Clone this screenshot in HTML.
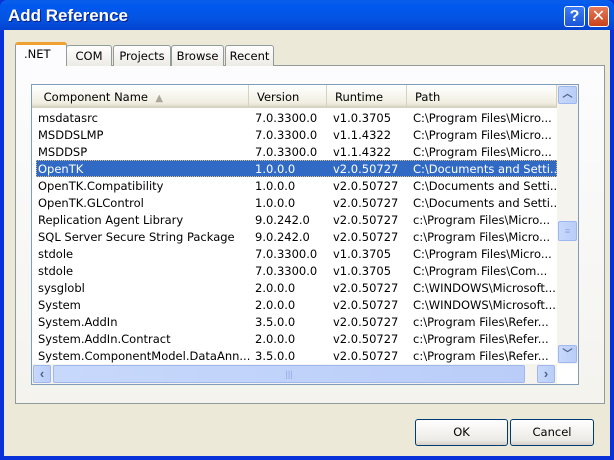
<!DOCTYPE html>
<html><head><style>
*{margin:0;padding:0;box-sizing:border-box}
body{width:614px;height:460px;overflow:hidden;font-family:"Liberation Sans","DejaVu Sans",sans-serif;font-size:12px;background:#0831d9;position:relative}
.a{position:absolute}
.title{left:0;top:0;width:614px;height:30px;background:linear-gradient(#0a5fe8,#0058ee 20%,#0454e3 60%,#0343d0);border-radius:7px 7px 0 0}
.title span{position:absolute;left:8px;top:6px;color:#fff;font-weight:bold;font-size:17px;text-shadow:1px 1px #0a1e8c}
.body{left:4px;top:30px;width:606px;height:426px;background:#ece9d8}
.tb{position:absolute;top:6px;width:21px;height:21px;border:1px solid #fff;border-radius:3px;color:#fff;font-weight:bold;text-align:center;font-size:16px;line-height:19px}
.tab{position:absolute;top:45px;height:21px;border:1px solid #919b9c;border-bottom:none;border-radius:3px 3px 0 0;background:linear-gradient(#fff,#ecebe5);text-align:center;line-height:20px;font-family:"DejaVu Sans",sans-serif;font-size:11.5px}
.panel{left:15px;top:65px;width:590px;height:339px;border:1px solid #919b9c;background:linear-gradient(#fcfcfe,#f4f3ee)}
.lv{left:31px;top:84px;width:548px;height:301px;border:1px solid #7f9db9;background:#fff}
.row{position:absolute;left:36px;width:521px;height:17px;font-family:"DejaVu Sans",sans-serif;font-size:11.5px;line-height:18px;white-space:nowrap;color:#000}
.row span{position:absolute;top:0}
.sel{background:#316ac5;color:#fff;outline:1px dotted #e0c080;outline-offset:-1px}
.hdr{position:absolute;top:85px;height:23px;border-right:1px solid #d6d2c2;background:linear-gradient(#fff,#f1efe2 85%,#e2decd);font-family:"DejaVu Sans",sans-serif;font-size:11.5px;line-height:24px;padding-left:8px;border-bottom:2px solid #d8d4c4}
.sb{background:linear-gradient(90deg,#c7d8fb,#b9cdf8);border:1px solid #9eb7ef;border-radius:2px;font-weight:bold}
.btn{position:absolute;top:419px;height:27px;border:1px solid #003c74;border-radius:3px;background:linear-gradient(#fff,#ecebe6 80%,#d6d0c5);text-align:center;line-height:25px;font-family:"DejaVu Sans",sans-serif;font-size:11.5px}
</style></head><body>
<div class="a title"><span>Add Reference</span>
<div class="tb" style="left:564px;background:linear-gradient(#3c7cf6,#1a55d8)">?</div>
<div class="tb" style="left:588px;background:linear-gradient(#e57a5a,#c8411b)">✕</div>
</div>
<div class="a body"></div>
<div class="a panel"></div>
<div class="tab" style="left:66px;width:46px">COM</div>
<div class="tab" style="left:113px;width:58px">Projects</div>
<div class="tab" style="left:171px;width:53px">Browse</div>
<div class="tab" style="left:225px;width:49px">Recent</div>
<div class="tab" style="left:15px;top:42px;width:52px;height:24px;background:#fcfcfe;border-top:3px solid #f0a030;text-align:left;padding-left:8px;line-height:18px">.NET</div>
<div class="a lv"></div>
<div class="hdr" style="left:32px;width:217px">&nbsp;Component Name &nbsp;<span style="color:#aca899;font-size:10px">▲</span></div>
<div class="hdr" style="left:249px;width:78px">Version</div>
<div class="hdr" style="left:327px;width:80px">Runtime</div>
<div class="hdr" style="left:407px;width:150px">Path</div>
<div id="rows"></div>
<div class="a" style="left:557px;top:85px;width:21px;height:279px;background:#f4f3ee"></div>
<div class="a sb" style="left:558px;top:86px;width:19px;height:18px;text-align:center;font-size:10px;line-height:16px;color:#4d6185">︿</div>
<div class="a sb" style="left:558px;top:345px;width:19px;height:18px;text-align:center;font-size:10px;line-height:18px;color:#4d6185">﹀</div>
<div class="a sb" style="left:558px;top:221px;width:19px;height:20px;text-align:center;font-size:9px;line-height:18px;color:#8da7e0">≡</div>
<div class="a" style="left:32px;top:364px;width:525px;height:20px;background:#f4f3ee"></div>
<div class="a sb" style="left:33px;top:365px;width:18px;height:18px;text-align:center;color:#4d6185;font-size:13px;line-height:15px">‹</div>
<div class="a sb" style="left:53px;top:365px;width:472px;height:18px;text-align:center;color:#8da7e0;font-size:9px;line-height:16px;font-weight:normal">|||</div>
<div class="a sb" style="left:537px;top:365px;width:18px;height:18px;text-align:center;color:#4d6185;font-size:13px;line-height:15px">›</div>
<div class="btn" style="left:415px;width:93px">OK</div>
<div class="btn" style="left:510px;width:84px">Cancel</div>
<script>
var d=[["msdatasrc","7.0.3300.0","v1.0.3705","C:\\Program Files\\Micro..."],
["MSDDSLMP","7.0.3300.0","v1.1.4322","C:\\Program Files\\Micro..."],
["MSDDSP","7.0.3300.0","v1.1.4322","C:\\Program Files\\Micro..."],
["OpenTK","1.0.0.0","v2.0.50727","C:\\Documents and Setti..."],
["OpenTK.Compatibility","1.0.0.0","v2.0.50727","C:\\Documents and Setti..."],
["OpenTK.GLControl","1.0.0.0","v2.0.50727","C:\\Documents and Setti..."],
["Replication Agent Library","9.0.242.0","v2.0.50727","c:\\Program Files\\Micro..."],
["SQL Server Secure String Package","9.0.242.0","v2.0.50727","c:\\Program Files\\Micro..."],
["stdole","7.0.3300.0","v1.0.3705","C:\\Program Files\\Micro..."],
["stdole","7.0.3300.0","v1.0.3705","C:\\Program Files\\Com..."],
["sysglobl","2.0.0.0","v2.0.50727","C:\\WINDOWS\\Microsoft..."],
["System","2.0.0.0","v2.0.50727","C:\\WINDOWS\\Microsoft..."],
["System.AddIn","3.5.0.0","v2.0.50727","c:\\Program Files\\Refer..."],
["System.AddIn.Contract","2.0.0.0","v2.0.50727","c:\\Program Files\\Refer..."],
["System.ComponentModel.DataAnn...","3.5.0.0","v2.0.50727","c:\\Program Files\\Refer..."]];
var h="";d.forEach(function(r,i){h+='<div class="row'+(i==3?' sel':'')+'" style="top:'+(109+i*17)+'px"><span style="left:2px">'+r[0]+'</span><span style="left:219px">'+r[1]+'</span><span style="left:297px">'+r[2]+'</span><span style="left:377px">'+r[3]+'</span></div>'});
document.getElementById("rows").innerHTML=h;
</script>
</body></html>
